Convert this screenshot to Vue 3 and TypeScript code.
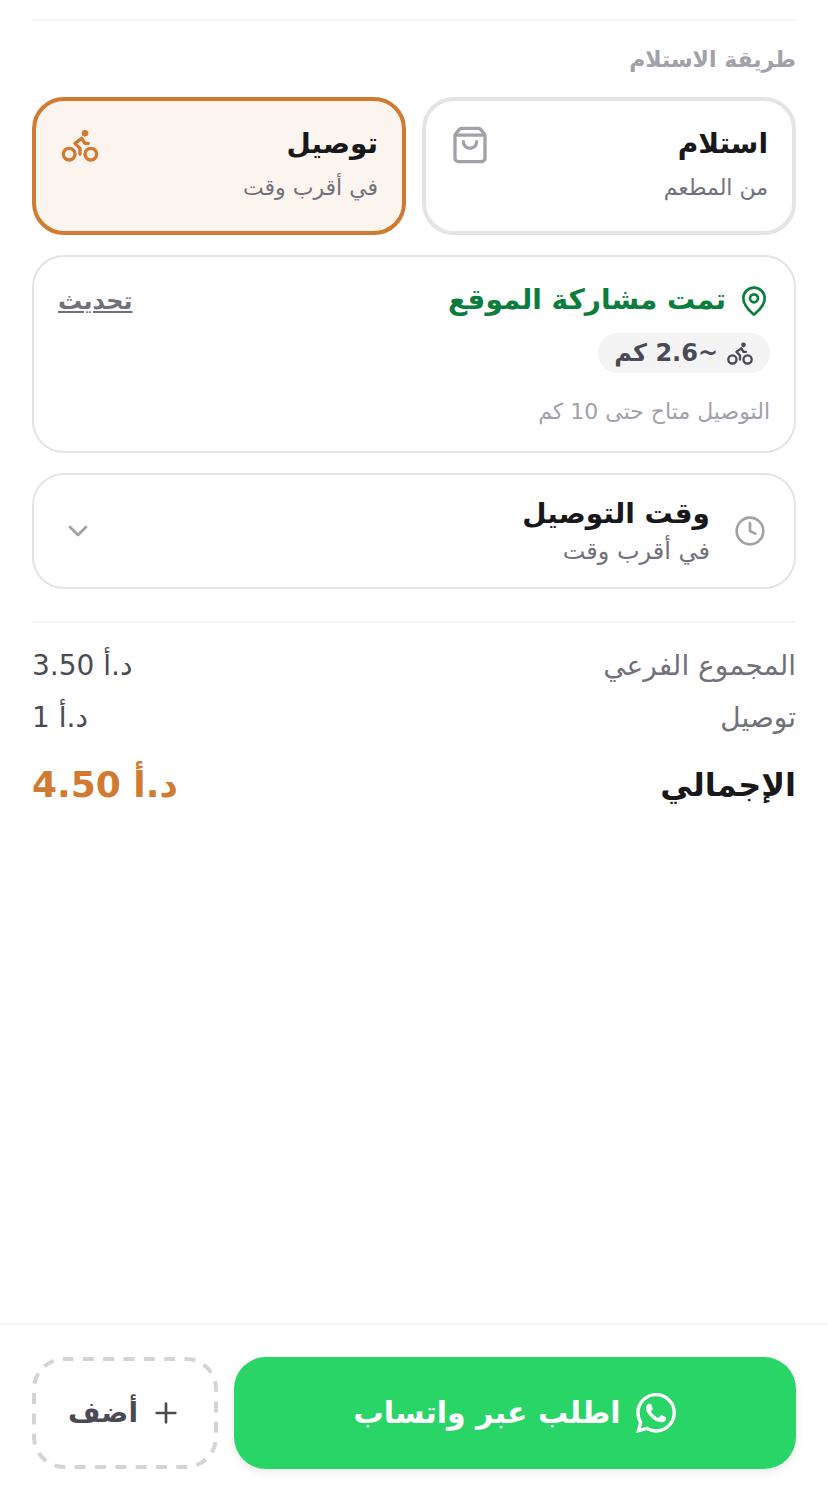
<script setup lang="ts">
const accent = '#d07a32'
</script>

<template>
  <div class="page" dir="rtl">
    <main class="content">
      <div class="rule top-rule"></div>
      <div class="section-label">طريقة الاستلام</div>
      <div class="methods">
        <div class="method">
          <div class="method-text">
            <div class="method-title">استلام</div>
            <div class="method-sub">من المطعم</div>
          </div>
          <svg class="method-icon" viewBox="0 0 24 24" fill="none" stroke="#a1a1aa" stroke-width="2" stroke-linecap="round" stroke-linejoin="round">
            <path d="M16 10a4 4 0 0 1-8 0" />
            <path d="M3.103 6.034h17.794" />
            <path d="M3.400 5.467a2 2 0 0 0-.400 1.200V20a2 2 0 0 0 2 2h14a2 2 0 0 0 2-2V6.667a2 2 0 0 0-.400-1.200l-2-2.667A2 2 0 0 0 17 2H7a2 2 0 0 0-1.600.8z" />
          </svg>
        </div>
        <div class="method active">
          <div class="method-text">
            <div class="method-title">توصيل</div>
            <div class="method-sub">في أقرب وقت</div>
          </div>
          <svg class="method-icon" viewBox="0 0 24 24" fill="none" :stroke="accent" stroke-width="2" stroke-linecap="round" stroke-linejoin="round">
            <circle cx="18.500" cy="17.500" r="3.500" />
            <circle cx="5.500" cy="17.500" r="3.500" />
            <circle cx="15" cy="5" r="1" :fill="accent" />
            <path d="M12 17.500V14l-3-3 4-3 2 3h2" />
          </svg>
        </div>
      </div>

      <section class="location">
        <div class="location-head">
          <div class="location-status">
            <svg class="pin" viewBox="0 0 24 24" fill="none" stroke="#0b7d3c" stroke-width="2" stroke-linecap="round" stroke-linejoin="round">
              <path d="M20 10c0 5-5.500 10.200-7.400 11.800a1 1 0 0 1-1.200 0C9.500 20.200 4 15 4 10a8 8 0 0 1 16 0" />
              <circle cx="12" cy="10" r="3" />
            </svg>
            <span class="status-text">تمت مشاركة الموقع</span>
          </div>
          <span class="update">تحديث</span>
        </div>
        <div class="distance">
          <svg class="small-bike" viewBox="0 0 24 24" fill="none" stroke="#4a4a55" stroke-width="2" stroke-linecap="round" stroke-linejoin="round">
            <circle cx="18.500" cy="17.500" r="3.500" />
            <circle cx="5.500" cy="17.500" r="3.500" />
            <circle cx="15" cy="5" r="1" fill="#4a4a55" />
            <path d="M12 17.500V14l-3-3 4-3 2 3h2" />
          </svg>
          <span>~2.6 كم</span>
        </div>
        <div class="location-note">التوصيل متاح حتى 10 كم</div>
      </section>

      <section class="time">
        <svg class="clock" viewBox="0 0 24 24" fill="none" stroke="#a1a1aa" stroke-width="2" stroke-linecap="round" stroke-linejoin="round">
          <circle cx="12" cy="12" r="10" />
          <path d="M12 6v6l4 2" />
        </svg>
        <div class="time-text">
          <div class="time-title">وقت التوصيل</div>
          <div class="time-sub">في أقرب وقت</div>
        </div>
        <svg class="chevron" viewBox="0 0 24 24" fill="none" stroke="#a1a1aa" stroke-width="2" stroke-linecap="round" stroke-linejoin="round">
          <path d="m6 9 6 6 6-6" />
        </svg>
      </section>

      <div class="rule totals-rule"></div>
      <div class="row first-row">
        <span class="row-label">المجموع الفرعي</span>
        <span class="row-value">د.أ 3.50</span>
      </div>
      <div class="row second-row">
        <span class="row-label">توصيل</span>
        <span class="row-value">د.أ 1</span>
      </div>
      <div class="total-row">
        <span class="total-label">الإجمالي</span>
        <span class="total-value">د.أ 4.50</span>
      </div>
    </main>

    <footer class="footer">
      <button class="whatsapp" type="button">
        <svg class="wa-icon" viewBox="0 0 24 24" fill="#fff">
          <path d="M17.472 14.382c-.297-.149-1.758-.867-2.030-.967-.273-.099-.471-.148-.670.150-.197.297-.767.966-.940 1.164-.173.199-.347.223-.644.075-.297-.150-1.255-.463-2.390-1.475-.883-.788-1.480-1.761-1.653-2.059-.173-.297-.018-.458.130-.606.134-.133.298-.347.446-.520.149-.174.198-.298.298-.497.099-.198.050-.371-.025-.520-.075-.149-.669-1.612-.916-2.207-.242-.579-.487-.500-.669-.510-.173-.008-.371-.010-.570-.010-.198 0-.520.074-.792.372-.272.297-1.040 1.016-1.040 2.479 0 1.462 1.065 2.875 1.213 3.074.149.198 2.096 3.200 5.077 4.487.709.306 1.262.489 1.694.625.712.227 1.360.195 1.871.118.571-.085 1.758-.719 2.006-1.413.248-.694.248-1.289.173-1.413-.074-.124-.272-.198-.570-.347m-5.421 7.403h-.004a9.870 9.870 0 0 1-5.031-1.378l-.361-.214-3.741.982.998-3.648-.235-.374a9.860 9.860 0 0 1-1.510-5.260c.001-5.450 4.436-9.884 9.888-9.884 2.640 0 5.122 1.030 6.988 2.898a9.825 9.825 0 0 1 2.893 6.994c-.003 5.450-4.437 9.884-9.885 9.884m8.413-18.297A11.815 11.815 0 0 0 12.050 0C5.495 0 .160 5.335.157 11.892c0 2.096.547 4.142 1.588 5.945L.057 24l6.305-1.654a11.882 11.882 0 0 0 5.683 1.448h.005c6.554 0 11.890-5.335 11.893-11.893a11.821 11.821 0 0 0-3.480-8.413z" />
        </svg>
        <span class="btn-text">اطلب عبر واتساب</span>
      </button>
      <button class="add" type="button">
        <svg class="dash" viewBox="0 0 186 112" fill="none" stroke="#d4d4d8" stroke-width="4">
          <rect x="2" y="2" width="182" height="108" rx="30" stroke-dasharray="11 9.330" stroke-dashoffset="1.500" />
        </svg>
        <svg class="plus" viewBox="0 0 24 24" fill="none" stroke="#4a4a55" stroke-width="2" stroke-linecap="round" stroke-linejoin="round">
          <path d="M5 12h14M12 5v14" />
        </svg>
        <span class="btn-text">أضف</span>
      </button>
    </footer>
  </div>
</template>

<style>
html, body { margin: 0; padding: 0; background: #fff; }
</style>

<style scoped>
.page {
  width: 828px;
  height: 1492px;
  display: flex;
  flex-direction: column;
  background: #fff;
  font-family: "DejaVu Sans", sans-serif;
  color: #18181b;
  box-sizing: border-box;
}
.content {
  flex: 1;
  min-height: 0;
  padding: 19px 32px 0;
}
.rule { height: 2px; background: #f4f4f5; }
.section-label {
  margin-top: 23px;
  font-size: 22px;
  line-height: 32px;
  font-weight: 700;
  color: #a1a1aa;
}
.methods {
  display: grid;
  grid-template-columns: 1fr 1fr;
  gap: 16px;
  margin-top: 21px;
}
.method {
  height: 138px;
  box-sizing: border-box;
  border: 4px solid #e4e4e7;
  border-radius: 32px;
  padding: 25px 24px 0;
  display: flex;
  justify-content: space-between;
  align-items: flex-start;
}
.method.active { border-color: #d07a32; background: #fbf4ef; }
.method-title { font-size: 28px; line-height: 36px; font-weight: 700; color: #18181b; }
.method-sub { margin-top: 12px; font-size: 22px; line-height: 28px; color: #71717a; }
.method-icon { width: 40px; height: 40px; flex: none; margin-top: -1px; }
.location {
  margin-top: 20px;
  height: 198px;
  box-sizing: border-box;
  border: 2px solid #e4e4e7;
  border-radius: 32px;
  padding: 24px 24px 0;
}
.location-head { display: flex; justify-content: space-between; align-items: center; height: 40px; }
.location-status {
  display: flex;
  align-items: center;
  gap: 12px;
  color: #0b7d3c;
  font-size: 28px;
  font-weight: 700;
  line-height: 40px;
}
.status-text { margin-top: -2px; }
.pin { width: 32px; height: 32px; flex: none; }
.update {
  font-size: 24px;
  font-weight: 700;
  color: #71717a;
  text-decoration: underline;
  line-height: 28px;
}
.distance {
  display: inline-flex;
  align-items: center;
  gap: 8px;
  margin-top: 12px;
  height: 40px;
  padding: 0 16px;
  border-radius: 20px;
  background: #f4f4f5;
  color: #4a4a55;
  font-size: 24px;
  font-weight: 700;
}
.small-bike { width: 28px; height: 28px; flex: none; }
.location-note { margin-top: 23px; font-size: 22px; line-height: 32px; color: #a1a1aa; }
.time {
  margin-top: 20px;
  height: 116px;
  box-sizing: border-box;
  border: 2px solid #e4e4e7;
  border-radius: 32px;
  padding: 0 28px;
  display: flex;
  align-items: center;
  gap: 24px;
}
.clock { width: 32px; height: 32px; flex: none; }
.time-text { flex: 1; padding-top: 4px; }
.time-title { font-size: 28px; line-height: 36px; font-weight: 700; margin-top: -4px; }
.time-sub { font-size: 24px; line-height: 30px; color: #71717a; margin-top: 4px; }
.chevron { width: 32px; height: 32px; flex: none; }
.totals-rule { margin-top: 32px; }
.row { display: flex; justify-content: space-between; font-size: 28px; line-height: 40px; }
.first-row { margin-top: 23px; }
.second-row { margin-top: 12px; }
.row-label { color: #71717a; }
.row-value { color: #4a4a55; }
.total-row {
  display: flex;
  justify-content: space-between;
  align-items: center;
  margin-top: 25px;
  font-weight: 700;
}
.total-label { font-size: 32px; line-height: 44px; }
.total-value { font-size: 36px; line-height: 44px; color: #d07a32; }
.footer {
  flex: none;
  border-top: 2px solid #f4f4f5;
  padding: 32px 32px 23px;
  display: flex;
  gap: 16px;
}
button { font-family: inherit; cursor: pointer; }
.btn-text { margin-top: -2px; position: relative; }
.whatsapp {
  flex: 1;
  height: 112px;
  border: none;
  border-radius: 32px;
  background: #29d566;
  color: #fff;
  font-size: 30px;
  font-weight: 700;
  display: flex;
  align-items: center;
  justify-content: center;
  gap: 16px;
  box-shadow: 0 4px 10px rgba(0, 0, 0, 0.08);
}
.wa-icon { width: 40px; height: 40px; flex: none; }
.add {
  position: relative;
  width: 186px;
  height: 112px;
  box-sizing: border-box;
  border: none;
  border-radius: 32px;
  background: #fff;
  color: #4a4a55;
  font-size: 28px;
  font-weight: 700;
  display: flex;
  align-items: center;
  justify-content: center;
  gap: 12px;
  padding: 0;
}
.dash { position: absolute; inset: 0; width: 186px; height: 112px; }
.plus { width: 32px; height: 32px; flex: none; }
</style>
